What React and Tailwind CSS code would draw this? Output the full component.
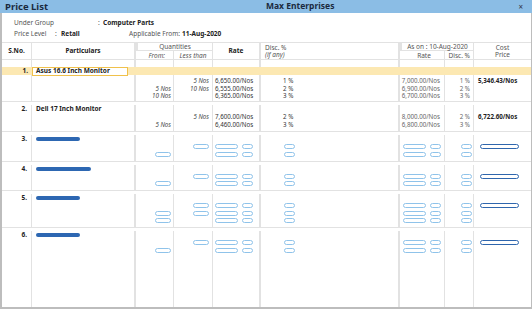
import React from 'react'

const COLS = 'grid grid-cols-[30px_104px_38px_39px_48px_139px_45px_29px_57px]'
const LINE = 'border-[#e2e2e2]'
const BORDERS = [
  `border-r ${LINE}`,
  `border-r-2 ${LINE}`,
  `border-r ${LINE}`,
  `border-r ${LINE}`,
  `border-r-2 ${LINE}`,
  `border-r-2 ${LINE}`,
  `border-r ${LINE}`,
  `border-r ${LINE}`,
  '',
]

const rows = [
  {
    no: '1.',
    name: 'Asus 16.6 Inch Monitor',
    active: true,
    lines: [
      { less: '5 Nos', rate: '6,650.00/Nos', disc: '1 %', arate: '7,000.00/Nos', adisc: '1 %', cost: '5,346.43/Nos' },
      { from: '5 Nos', less: '10 Nos', rate: '6,555.00/Nos', disc: '2 %', arate: '6,900.00/Nos', adisc: '2 %' },
      { from: '10 Nos', rate: '6,365.00/Nos', disc: '3 %', arate: '6,700.00/Nos', adisc: '3 %' },
    ],
  },
  {
    no: '2.',
    name: 'Dell 17 Inch Monitor',
    lines: [
      { less: '5 Nos', rate: '7,600.00/Nos', disc: '2 %', arate: '8,000.00/Nos', adisc: '2 %', cost: '6,722.60/Nos' },
      { from: '5 Nos', rate: '6,460.00/Nos', disc: '3 %', arate: '6,800.00/Nos', adisc: '3 %' },
    ],
  },
]

const first = { less: 1, rate: 1, disc: 1, arate: 1, adisc: 1, cost: 1 }
const skeletons = [
  { no: '3.', bar: 'w-[44px]', lines: [first, { from: 1, rate: 1, disc: 1, arate: 1, adisc: 1 }] },
  { no: '4.', bar: 'w-[55px]', lines: [first, { from: 1, rate: 1, disc: 1, arate: 1, adisc: 1 }] },
  {
    no: '5.',
    bar: 'w-[44px]',
    lines: [
      first,
      { from: 1, less: 1, rate: 1, disc: 1, arate: 1, adisc: 1 },
      { from: 1, rate: 1, disc: 1, arate: 1, adisc: 1 },
    ],
  },
  { no: '6.', bar: 'w-[44px]', lines: [first, { from: 1, rate: 1, disc: 1, arate: 1, adisc: 1 }] },
]

const Pill = ({ w }) => <span className={`inline-block h-[5px] ${w} rounded-full border border-[#8fc3ea] bg-white`} />

const Cells = ({ children, className = '' }) => (
  <div className={`${COLS} ${className}`}>
    {children.map((c, i) => (
      <div key={i} className={`${BORDERS[i]} min-w-0`}>
        {c}
      </div>
    ))}
  </div>
)

function TextLines({ lines }) {
  const line = 'h-[7.5px] leading-[7.5px] whitespace-nowrap'
  return (
    <Cells className="text-[6.2px]">
      {[
        null,
        null,
        lines.map((l, i) => (
          <div key={i} className={`${line} text-right pr-[2px] italic text-[#444]`}>{l.from}</div>
        )),
        lines.map((l, i) => (
          <div key={i} className={`${line} text-right pr-[3px] italic text-[#444]`}>{l.less}</div>
        )),
        lines.map((l, i) => (
          <div key={i} className={`${line} pl-[2px] text-[#333]`}>{l.rate}</div>
        )),
        lines.map((l, i) => (
          <div key={i} className={`${line} pl-[22px] text-[#333]`}>{l.disc}</div>
        )),
        lines.map((l, i) => (
          <div key={i} className={`${line} text-right pr-[4px] text-[#666]`}>{l.arate}</div>
        )),
        lines.map((l, i) => (
          <div key={i} className={`${line} text-right pr-[3px] text-[#666]`}>{l.adisc}</div>
        )),
        lines.map((l, i) => (
          <div key={i} className={`${line} pl-[4px] font-bold text-[#222]`}>{l.cost}</div>
        )),
      ]}
    </Cells>
  )
}

function PillLines({ lines }) {
  const row = 'h-[7.5px] flex items-center'
  return (
    <Cells>
      {[
        null,
        null,
        lines.map((l, i) => (
          <div key={i} className={`${row} justify-end pr-[2px]`}>{l.from && <Pill w="w-[16px]" />}</div>
        )),
        lines.map((l, i) => (
          <div key={i} className={`${row} justify-end pr-[3px]`}>{l.less && <Pill w="w-[16px]" />}</div>
        )),
        lines.map((l, i) => (
          <div key={i} className={`${row} gap-[4px] pl-[2px]`}>
            {l.rate && <><Pill w="w-[23px]" /><Pill w="w-[11px]" /></>}
          </div>
        )),
        lines.map((l, i) => (
          <div key={i} className={`${row} pl-[23px]`}>{l.disc && <Pill w="w-[11px]" />}</div>
        )),
        lines.map((l, i) => (
          <div key={i} className={`${row} gap-[4px] justify-end pr-[3px]`}>
            {l.arate && <><Pill w="w-[23px]" /><Pill w="w-[11px]" /></>}
          </div>
        )),
        lines.map((l, i) => (
          <div key={i} className={`${row} justify-end pr-[1px]`}>{l.adisc && <Pill w="w-[11px]" />}</div>
        )),
        lines.map((l, i) => (
          <div key={i} className={`${row} pl-[6px]`}>
            {l.cost && <span className="inline-block h-[5px] w-[39px] rounded-full border border-[#2f66ad] bg-white" />}
          </div>
        )),
      ]}
    </Cells>
  )
}

const empty = Array(9).fill(null)

export default function App() {
  return (
    <div
      className="w-[532px] h-[309px] bg-white text-[6px] text-[#333] overflow-hidden"
      style={{ fontFamily: '"Noto Sans", "Open Sans", sans-serif' }}
    >
      {/* Title bar */}
      <div className="h-[13px] bg-[#8bbde5] flex items-center px-[5px] text-[#1b2a3e]">
        <span className="w-[261px] font-bold text-[9.5px] leading-none">Price List</span>
        <span className="flex-1 font-bold text-[8.5px] leading-none">Max Enterprises</span>
        <span className="text-[8px] leading-none text-[#334] pr-[4px]">×</span>
      </div>

      <div className="h-[296px] flex flex-col border-l-2 border-r border-b-2 border-[#bdbdbd]">
        {/* Info */}
        <div className="h-[29px] pl-[12px] pt-[4px] text-[6.5px] text-[#555]">
          <div className="h-[11px] flex items-center">
            <span className="w-[84px]">Under Group</span>
            <span className="w-[5px]">:</span>
            <span className="font-bold text-[#222]">Computer Parts</span>
          </div>
          <div className="h-[11px] flex items-center">
            <span className="w-[41px]">Price Level</span>
            <span className="w-[6px]">:</span>
            <span className="w-[68px] font-bold text-[#222]">Retail</span>
            <span className="w-[53px]">Applicable From:</span>
            <span className="font-bold text-[#222]">11-Aug-2020</span>
          </div>
        </div>

        {/* Header */}
        <div className={`border-t border-b ${LINE}`}>
          <Cells className="h-[16px] text-[6.5px]">
            {[
              <div className="h-full flex items-center justify-center font-bold text-[#222]">S.No.</div>,
              <div className="h-full flex items-center justify-center font-bold text-[#222]">Particulars</div>,
              <div className="h-full flex flex-col justify-end items-end pr-[8px] italic text-[#555]">
                <div className="h-[7px] leading-[7px]">From:</div>
              </div>,
              <div className="h-full flex flex-col justify-end items-center italic text-[#555]">
                <div className="h-[7px] leading-[7px]">Less than</div>
              </div>,
              <div className="h-full flex items-center justify-center font-bold text-[#222]">Rate</div>,
              <div className="h-full flex flex-col justify-center pl-[4px] text-[#555] leading-[7.5px]">
                <div>Disc. %</div>
                <div className="italic">(if any)</div>
              </div>,
              <div className="h-full flex flex-col justify-end items-center pl-[4px] text-[#555]">
                <div className="h-[7px] leading-[7px]">Rate</div>
              </div>,
              <div className="h-full flex flex-col justify-end items-end pr-[3px] text-[#555]">
                <div className="h-[7px] leading-[7px]">Disc. %</div>
              </div>,
              <div className="h-full flex flex-col justify-center items-center text-[#555] leading-[7.5px]">
                <div>Cost</div>
                <div>Price</div>
              </div>,
            ]}
          </Cells>
        </div>

        {/* Spanning header labels laid over the header cells */}
        <div className="relative h-0">
          <div className="absolute left-[134px] w-[77px] top-[-17px] h-[8px] bg-white border-b border-l-2 border-r border-[#e2e2e2] text-center text-[6.5px] leading-[8px] text-[#555]">
            Quantities
          </div>
          <div className="absolute left-[398px] w-[74px] top-[-17px] h-[8px] bg-white border-b border-l-2 border-r border-[#e2e2e2] text-center text-[6.5px] leading-[8px] text-[#555]">
            As on : 10-Aug-2020
          </div>
        </div>

        {/* Rows */}
        {rows.map((r) => (
          <div key={r.no} className={`border-b ${LINE}`}>
            {r.active ? (
              <>
                <Cells className="h-[7px]">{empty}</Cells>
                <div className="h-[8px] bg-[#fce8b2] flex items-center">
                  <div className="w-[30px] text-right pr-[4px] font-bold text-[6.5px] text-[#222]">{r.no}</div>
                  <div className="w-[96px] h-[9px] border border-[#f0c14b] bg-white flex items-center pl-[3px] font-bold text-[6.5px] text-[#222]">
                    {r.name}
                  </div>
                </div>
                <Cells className="h-[2px]">{empty}</Cells>
                <TextLines lines={r.lines} />
                <Cells className="h-[1.5px]">{empty}</Cells>
              </>
            ) : (
              <>
                <Cells className="h-[11px] pt-[3px]">
                  {[
                    <div className="text-right pr-[4px] font-bold text-[6.5px] leading-[8px] text-[#222]">{r.no}</div>,
                    <div className="pl-[4px] font-bold text-[6.5px] leading-[8px] text-[#222]">{r.name}</div>,
                    null, null, null, null, null, null, null,
                  ]}
                </Cells>
                <TextLines lines={r.lines} />
                <Cells className="h-[3px]">{empty}</Cells>
              </>
            )}
          </div>
        ))}

        {skeletons.map((r, idx) => (
          <div key={r.no} className={idx < skeletons.length - 1 ? `border-b ${LINE}` : ''}>
            <Cells className="h-[11px] pt-[3px]">
              {[
                <div className="text-right pr-[4px] font-bold text-[6.5px] leading-[8px] text-[#222]">{r.no}</div>,
                <div className="h-[8px] flex items-center pl-[4px]">
                  <span className={`inline-block h-[4px] ${r.bar} rounded-full bg-[#2d67b2]`} />
                </div>,
                null, null, null, null, null, null, null,
              ]}
            </Cells>
            <PillLines lines={r.lines} />
            <Cells className="h-[2.5px]">{empty}</Cells>
          </div>
        ))}

        <Cells className="flex-1">{empty}</Cells>
      </div>
    </div>
  )
}
